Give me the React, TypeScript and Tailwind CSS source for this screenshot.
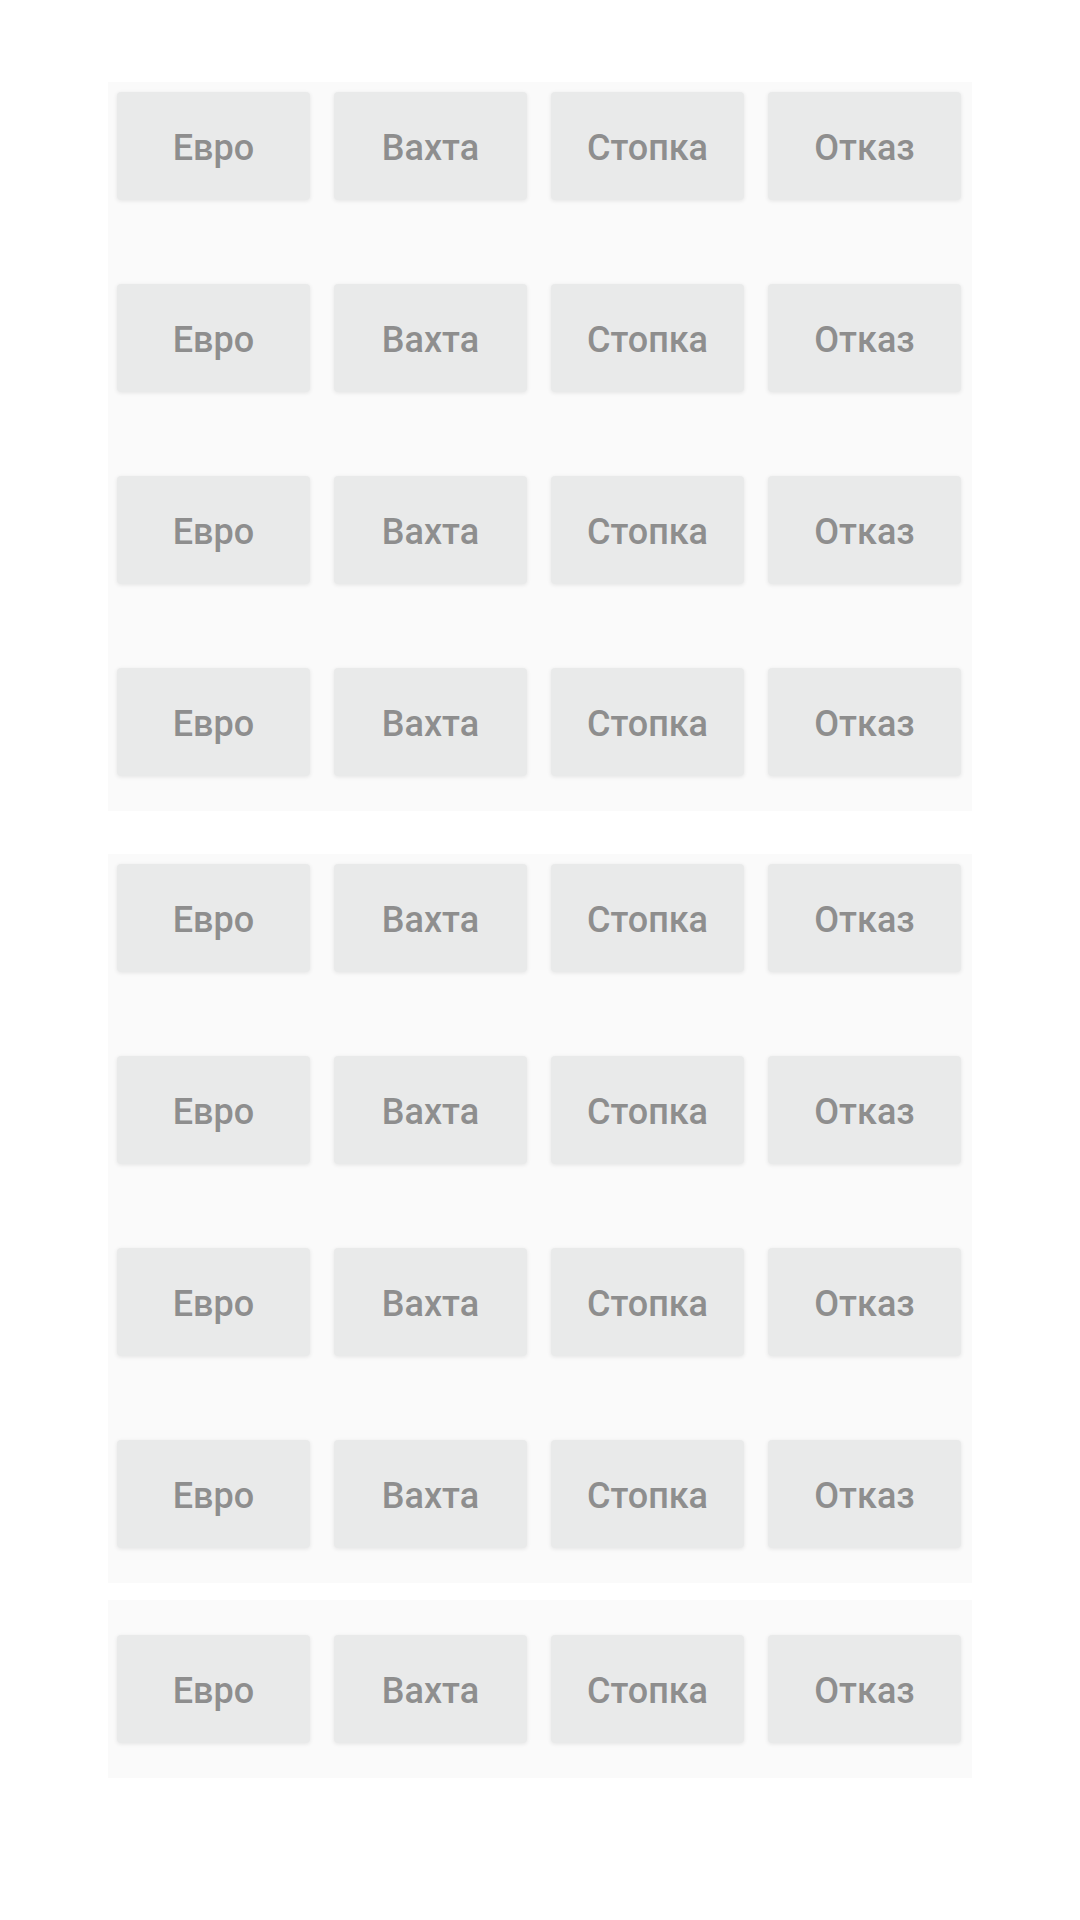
const labels = ['Евро', 'Вахта', 'Стопка', 'Отказ'];

const panels = [
  { rows: 4, className: 'pt-[10px] pb-[35px]' },
  { rows: 4, className: 'pt-[10px] pb-[35px]' },
  { rows: 1, className: 'py-[35px]' },
];

function KeyButton({ label }: { label: string }) {
  return (
    <button className="h-[108px] pt-[4px] rounded-[4px] bg-[#e9eaea] text-[36px] font-medium text-[#8e8e8e] shadow-[0_1px_4px_rgba(0,0,0,0.09)] flex items-center justify-center">
      {label}
    </button>
  );
}

export default function App() {
  return (
    <div
      className="min-h-[1920px] bg-white pt-[82px] flex flex-col items-center"
      style={{ fontFamily: 'Roboto, "Noto Sans", sans-serif' }}
    >
      {panels.map((panel, p) => (
        <div
          key={p}
          className={`w-[864px] bg-[#fafafa] pl-[9px] pr-[11px] flex flex-col gap-[84px] ${panel.className} ${
            p === 0 ? 'mb-[43px]' : p === 1 ? 'mb-[17px]' : ''
          }`}
        >
          {Array.from({ length: panel.rows }).map((_, r) => (
            <div key={r} className="grid grid-cols-4 gap-x-6">
              {labels.map((label) => (
                <KeyButton key={label} label={label} />
              ))}
            </div>
          ))}
        </div>
      ))}
    </div>
  );
}
